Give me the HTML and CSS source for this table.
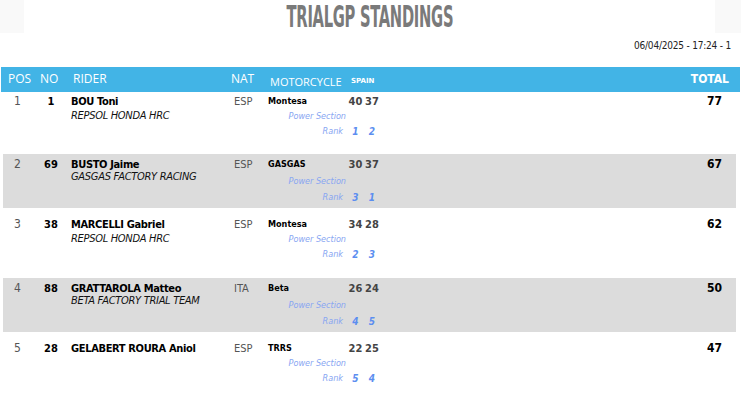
FILE: index.html
```html
<!DOCTYPE html>
<html lang="en">
<head>
<meta charset="utf-8">
<title>TrialGP Standings</title>
<link rel="stylesheet" href="styles.css">
</head>
<body>
<div class="topbar">
  <div class="titlebox"><h1 class="title">TRIALGP STANDINGS</h1></div>
</div>
<div class="meta">06/04/2025 - 17:24 - 1</div>
<div class="thead">
  <span class="h-pos">POS</span>
  <span class="h-no">NO</span>
  <span class="h-rider">RIDER</span>
  <span class="h-nat">NAT</span>
  <span class="h-moto">MOTORCYCLE</span>
  <span class="h-event">SPAIN</span>
  <span class="h-total">TOTAL</span>
</div>
<div class="rows">
  <div class="row first">
    <span class="pos">1</span><span class="no">1</span><span class="name">BOU Toni</span><span class="nat">ESP</span><span class="moto">Montesa</span><span class="score">40</span><span class="score">37</span><span class="total">77</span>
    <span class="team">REPSOL HONDA HRC</span><span class="ps">Power Section</span>
    <span class="rank">Rank</span><span class="rk">1</span><span class="rk">2</span>
  </div>
  <div class="row alt">
    <span class="pos">2</span><span class="no">69</span><span class="name">BUSTO Jaime</span><span class="nat">ESP</span><span class="moto">GASGAS</span><span class="score">30</span><span class="score">37</span><span class="total">67</span>
    <span class="team">GASGAS FACTORY RACING</span><span class="ps">Power Section</span>
    <span class="rank">Rank</span><span class="rk">3</span><span class="rk">1</span>
  </div>
  <div class="row">
    <span class="pos">3</span><span class="no">38</span><span class="name">MARCELLI Gabriel</span><span class="nat">ESP</span><span class="moto">Montesa</span><span class="score">34</span><span class="score">28</span><span class="total">62</span>
    <span class="team">REPSOL HONDA HRC</span><span class="ps">Power Section</span>
    <span class="rank">Rank</span><span class="rk">2</span><span class="rk">3</span>
  </div>
  <div class="row alt">
    <span class="pos">4</span><span class="no">88</span><span class="name">GRATTAROLA Matteo</span><span class="nat">ITA</span><span class="moto">Beta</span><span class="score">26</span><span class="score">24</span><span class="total">50</span>
    <span class="team">BETA FACTORY TRIAL TEAM</span><span class="ps">Power Section</span>
    <span class="rank">Rank</span><span class="rk">4</span><span class="rk">5</span>
  </div>
  <div class="row">
    <span class="pos">5</span><span class="no">28</span><span class="name">GELABERT ROURA Aniol</span><span class="nat">ESP</span><span class="moto">TRRS</span><span class="score">22</span><span class="score">25</span><span class="total">47</span>
    <span class="team"></span><span class="ps">Power Section</span>
    <span class="rank">Rank</span><span class="rk">5</span><span class="rk">4</span>
  </div>
</div>
</body>
</html>
```

FILE: styles.css
```css
body {
  margin: 0;
  background: #fff;
  font-family: "DejaVu Sans Condensed", "DejaVu Sans", sans-serif;
  font-stretch: condensed;
  color: #000;
}
.topbar {
  background: #f9f9f9;
  padding: 0 26px 0 24px;
}
.titlebox {
  background: #fff;
  height: 33px;
  text-align: center;
  overflow: hidden;
}
.title {
  display: inline-block;
  margin: 0;
  font-size: 30px;
  line-height: 33px;
  font-weight: bold;
  color: #7a7a7a;
  letter-spacing: -0.5px;
  transform: scaleX(0.545);
}
.meta {
  height: 34px;
  line-height: 26px;
  text-align: right;
  padding-right: 10px;
  font-size: 10px;
  letter-spacing: -0.2px;
  color: #222;
}
.thead {
  margin: 0 1px;
  height: 25px;
  box-sizing: border-box;
  padding-bottom: 3px;
  background: #42b4e6;
  color: #fff;
  display: grid;
  grid-template-columns: 39px 33px 158px 39px 81px 1fr auto;
  align-items: center;
  font-family: "Open Sans", sans-serif;
  font-stretch: normal;
  font-size: 12px;
}
.h-pos { padding-left: 7px; }
.h-moto { font-size: 11px; padding-top: 6px; }
.h-event { font-family: "DejaVu Sans", sans-serif; font-size: 7px; font-weight: bold; padding-top: 6px; }
.h-total {
  font-family: "DejaVu Sans Condensed", "DejaVu Sans", sans-serif;
  font-stretch: condensed;
  font-weight: bold;
  font-size: 12px;
  padding-right: 11px;
  padding-top: 1px;
}
.row {
  display: grid;
  grid-template-columns: 31px 34px 163px 37px 79px 17px 16px 1fr auto;
  grid-template-rows: 14px 16px 14px;
  padding: 9px 14px 17px 0;
  margin: 0 5px 0 3px;
}
.row.first { padding-top: 2px; padding-bottom: 16px; }
.row.alt {
  background: #dcdcdc;
  grid-template-rows: 16px 18px 14px;
  padding-top: 2px;
  padding-bottom: 4px;
}
.row > span { white-space: nowrap; }
.pos {
  padding-left: 11px;
  font-size: 12px;
  color: #555;
}
.no { text-align: center; font-weight: bold; font-size: 11px; }
.name { padding-left: 3px; font-weight: bold; font-size: 11px; letter-spacing: -0.35px; }
.nat { padding-left: 3px; font-size: 11px; color: #555; }
.moto { font-weight: bold; font-size: 9px; }
.score { text-align: center; font-weight: bold; font-size: 11px; color: #444; }
.total { font-weight: bold; font-size: 12px; text-align: right; }
.row > .pos, .row > .no, .row > .name, .row > .nat, .row > .moto, .row > .score, .row > .total {
  grid-row: 1;
  align-self: center;
}
.team {
  grid-row: 2;
  grid-column: 3;
  padding-left: 3px;
  font-style: italic;
  font-size: 11px;
  letter-spacing: -0.3px;
  color: #111;
  align-self: start;
  line-height: 16px;
}
.row.alt .team { line-height: 12px; margin-top: -1px; }
.ps {
  grid-row: 2;
  grid-column: 5;
  text-align: right;
  padding-right: 1px;
  font-style: italic;
  font-size: 9px;
  color: #88a6f2;
  align-self: center;
}
.rank {
  grid-row: 3;
  grid-column: 5;
  text-align: right;
  padding-right: 4px;
  font-style: italic;
  font-size: 9px;
  color: #88a6f2;
  align-self: center;
}
.rk {
  grid-row: 3;
  grid-column: 6;
  text-align: center;
  font-style: italic;
  font-weight: bold;
  font-size: 10px;
  color: #5c8ef0;
  align-self: center;
}
.rk + .rk { grid-column: 7; }
```
